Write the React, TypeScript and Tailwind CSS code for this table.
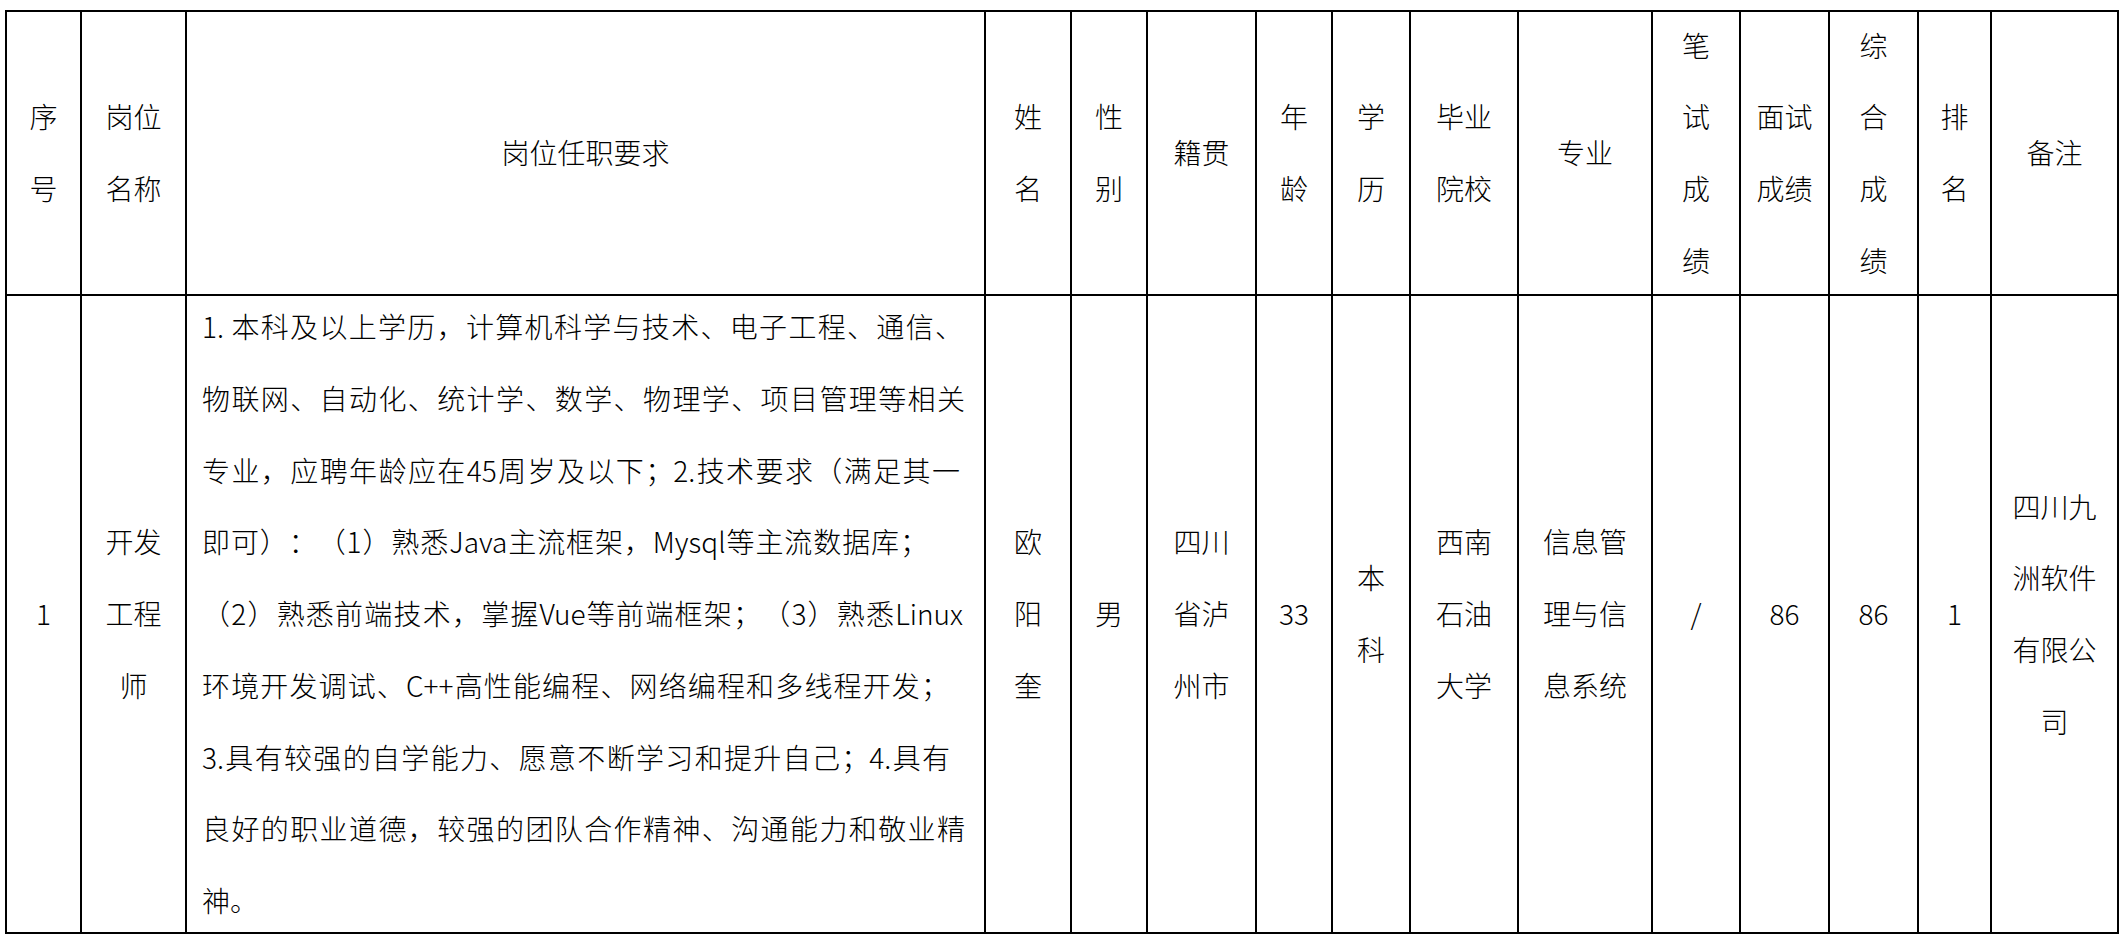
import React from "react";

const Cell = ({ children, left = false }: { children: React.ReactNode; left?: boolean }) => (
  <div
    className={
      left
        ? "bg-white flex items-center justify-start overflow-visible"
        : "bg-white flex items-center justify-center text-center whitespace-nowrap"
    }
  >
    {children}
  </div>
);

export default function App() {
  return (
    <div className="w-[2128px] h-[945px] bg-white pt-[10px] pl-[5px] font-['Noto_Sans_CJK_SC',sans-serif] font-light text-[28px] leading-[71.7px] text-black [text-spacing-trim:space-all]">
      <div className="grid grid-cols-[73px_103px_797px_84px_74px_107px_74px_76px_106px_132px_86px_87px_87px_71px_125px] grid-rows-[282px_636px] gap-[2px] p-[2px] bg-black w-[2114px]">
        {/* header */}
        <Cell>序<br />号</Cell>
        <Cell>岗位<br />名称</Cell>
        <Cell>岗位任职要求</Cell>
        <Cell>姓<br />名</Cell>
        <Cell>性<br />别</Cell>
        <Cell>籍贯</Cell>
        <Cell>年<br />龄</Cell>
        <Cell>学<br />历</Cell>
        <Cell>毕业<br />院校</Cell>
        <Cell>专业</Cell>
        <Cell>笔<br />试<br />成<br />绩</Cell>
        <Cell>面试<br />成绩</Cell>
        <Cell>综<br />合<br />成<br />绩</Cell>
        <Cell>排<br />名</Cell>
        <Cell>备注</Cell>

        {/* body */}
        <Cell>1</Cell>
        <Cell>开发<br />工程<br />师</Cell>
        <Cell left>
          <div className="pl-[15px] whitespace-nowrap">
            <div className="w-[761px] text-justify [text-align-last:justify]">1. 本科及以上学历，计算机科学与技术、电子工程、通信、</div>
            <div className="w-[763px] text-justify [text-align-last:justify]">物联网、自动化、统计学、数学、物理学、项目管理等相关</div>
            <div className="w-[758px] text-justify [text-align-last:justify]">专业，应聘年龄应在45周岁及以下；2.技术要求（满足其一</div>
            <div className="w-[726px] text-justify [text-align-last:justify]">即可）：（1）熟悉Java主流框架，Mysql等主流数据库；</div>
            <div className="w-[761px] text-justify [text-align-last:justify]">（2）熟悉前端技术，掌握Vue等前端框架；（3）熟悉Linux</div>
            <div className="w-[747px] text-justify [text-align-last:justify]">环境开发调试、C++高性能编程、网络编程和多线程开发；</div>
            <div className="w-[748px] text-justify [text-align-last:justify]">3.具有较强的自学能力、愿意不断学习和提升自己；4.具有</div>
            <div className="w-[763px] text-justify [text-align-last:justify]">良好的职业道德，较强的团队合作精神、沟通能力和敬业精</div>
            <div className="text-left">神。</div>
          </div>
        </Cell>
        <Cell>欧<br />阳<br />奎</Cell>
        <Cell>男</Cell>
        <Cell>四川<br />省泸<br />州市</Cell>
        <Cell>33</Cell>
        <Cell>本<br />科</Cell>
        <Cell>西南<br />石油<br />大学</Cell>
        <Cell>信息管<br />理与信<br />息系统</Cell>
        <Cell>/</Cell>
        <Cell>86</Cell>
        <Cell>86</Cell>
        <Cell>1</Cell>
        <Cell>四川九<br />洲软件<br />有限公<br />司</Cell>
      </div>
    </div>
  );
}
